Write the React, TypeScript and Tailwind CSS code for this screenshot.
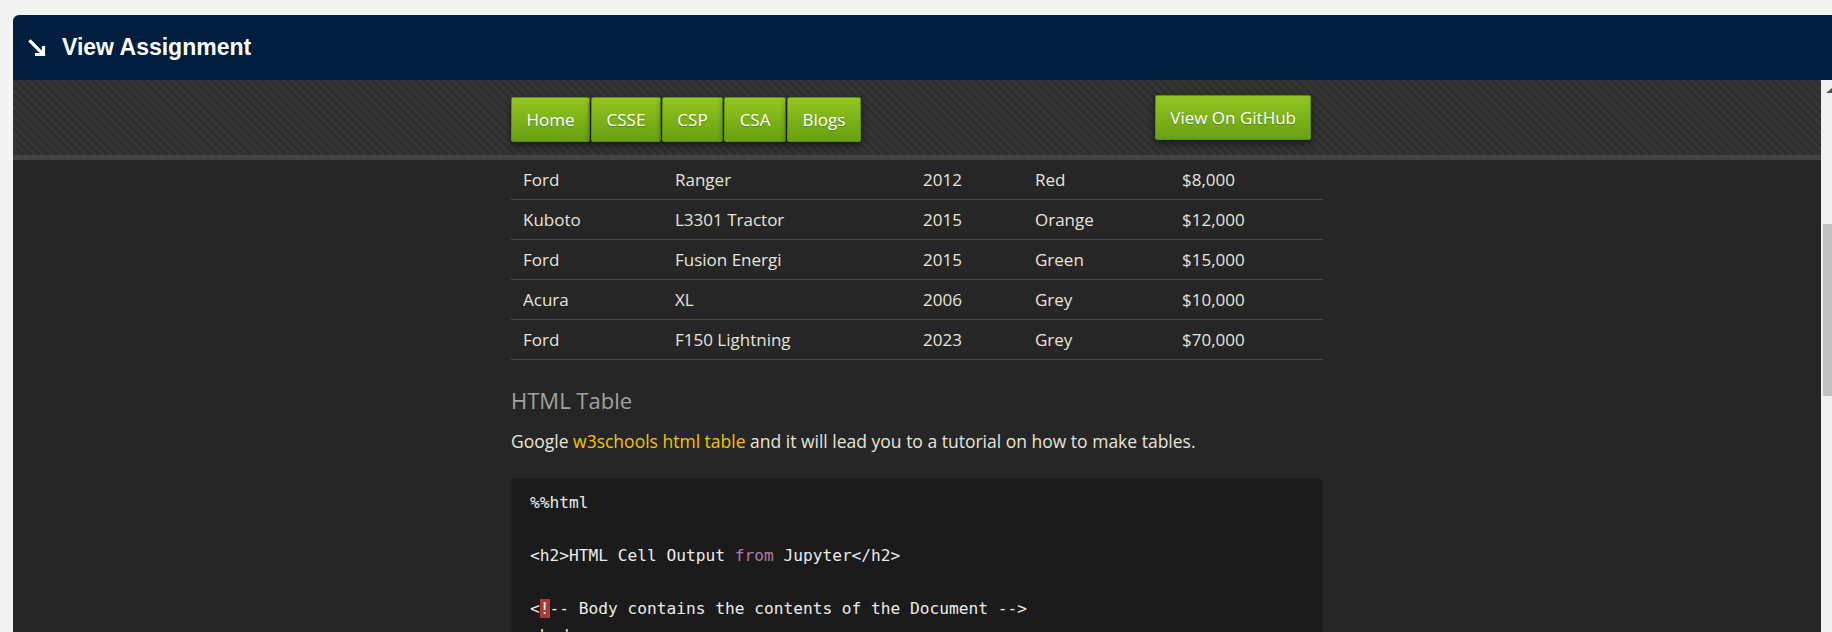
import React from 'react'

const rows = [
  ['Ford', 'Ranger', '2012', 'Red', '$8,000'],
  ['Kuboto', 'L3301 Tractor', '2015', 'Orange', '$12,000'],
  ['Ford', 'Fusion Energi', '2015', 'Green', '$15,000'],
  ['Acura', 'XL', '2006', 'Grey', '$10,000'],
  ['Ford', 'F150 Lightning', '2023', 'Grey', '$70,000'],
]

const navLinks = ['Home', 'CSSE', 'CSP', 'CSA', 'Blogs']

const btn =
  'h-[45px] flex items-center text-[17px] text-white rounded-[2px] border border-[#5b8f0e] bg-[linear-gradient(#94c520,#67a011)] shadow-[0_3px_6px_rgba(0,0,0,0.55)] [text-shadow:0_1px_1px_rgba(0,0,0,0.25)]'

function ArrowIcon() {
  return (
    <svg width="18" height="18" viewBox="0 0 18 18" fill="none" stroke="white" strokeWidth="3.2" strokeLinecap="square">
      <path d="M2.5 2.5 L14.5 14.5" />
      <path d="M7 15.5 H15.5 V7" strokeLinecap="butt" />
    </svg>
  )
}

export default function App() {
  return (
    <div className="w-[1832px] h-[632px] overflow-hidden bg-[#f3f3f3] pt-[15px] pl-[13px] flex flex-col">
      {/* assignment header */}
      <div className="h-[65px] shrink-0 bg-[#001f3f] rounded-tl-[6px] flex items-center pl-[15px] gap-[16px]">
        <ArrowIcon />
        <span className="text-white font-bold text-[23px] font-['Liberation_Sans',Arial,sans-serif]">
          View Assignment
        </span>
      </div>

      <div className="flex flex-1 min-h-0">
        {/* embedded page */}
        <div className="flex-1 bg-[#262626] overflow-hidden flex flex-col font-['Open_Sans',sans-serif]">
          <div className="h-[75px] shrink-0 bg-[repeating-linear-gradient(45deg,#2d2d2d_0px,#2d2d2d_2px,#343434_2px,#343434_6px)] flex justify-center">
            <div className="w-[812px] flex justify-between items-start">
              <div className="flex gap-[1px] mt-[17px]">
                {navLinks.map((l) => (
                  <div key={l} className={btn + ' px-[14.5px]'}>
                    {l}
                  </div>
                ))}
              </div>
              <div className={btn + ' mt-[15px] mr-[12px] px-[14px]'}>View On GitHub</div>
            </div>
          </div>
          <div className="h-[5px] shrink-0 bg-[#424242]" />

          <div className="w-[812px] mx-auto">
            <div className="text-[17px] text-[#e8e4da]">
              {rows.map((r, i) => (
                <div
                  key={i}
                  className="grid grid-cols-[152px_248px_112px_147px_153px] h-[40px] items-center border-b border-[#474747]"
                >
                  {r.map((c, j) => (
                    <div key={j} className="pl-[12px]">
                      {c}
                    </div>
                  ))}
                </div>
              ))}
            </div>

            <h2 className="mt-[25px] text-[22px] leading-[30px] text-[#a3a3a3]">HTML Table</h2>
            <p className="mt-[13px] text-[17.5px] leading-[26px] text-[#e8e4da]">
              Google <span className="text-[#f5c400]">w3schools html table</span> and it will lead you to a
              tutorial on how to make tables.
            </p>

            <div className="mt-[24px] bg-[#1b1b1b] rounded-[4px] border border-[#202020] pl-[18px] pt-[11px] pb-[20px] font-['DejaVu_Sans_Mono',monospace] text-[16.2px] leading-[26.5px] text-[#ececec] whitespace-pre">
              <div>%%html</div>
              <div>&nbsp;</div>
              <div>
                {'<h2>HTML Cell Output '}
                <span className="text-[#b07ba6]">from</span>
                {' Jupyter</h2>'}
              </div>
              <div>&nbsp;</div>
              <div>
                {'<'}
                <span className="bg-[#a83a3a]">!</span>
                {'-- Body contains the contents of the Document -->'}
              </div>
              <div>{'<body>'}</div>
              <div>{'<table>'}</div>
            </div>
          </div>
        </div>

        {/* scrollbar */}
        <div className="w-[11px] shrink-0 bg-[#f1f1f1] flex flex-col items-end">
          <svg className="mt-[8px]" width="6" height="5" viewBox="0 0 6 5">
            <path d="M6 0 L6 5 L0 5 Z" fill="#505050" />
          </svg>
          <div className="mt-[131px] w-[9px] h-[172px] bg-[#c1c1c1]" />
        </div>
      </div>
    </div>
  )
}
